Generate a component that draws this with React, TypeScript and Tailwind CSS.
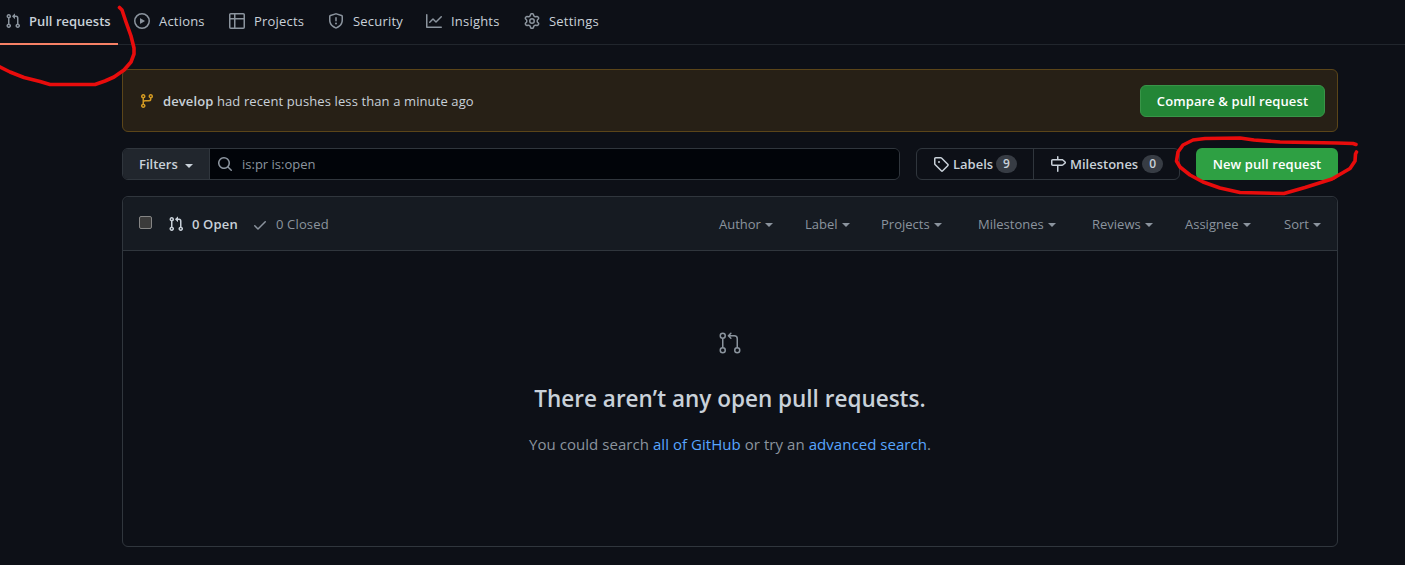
import React from "react";
import { GoGitPullRequest } from "react-icons/go";

const paths = {
  pull: "M7.177 3.073L9.573.677A.25.25 0 0110 .854v4.792a.25.25 0 01-.427.177L7.177 3.427a.25.25 0 010-.354zM3.75 2.5a.75.75 0 100 1.5.75.75 0 000-1.5zm-2.25.75a2.25 2.25 0 113 2.122v5.256a2.251 2.251 0 11-1.5 0V5.372A2.25 2.25 0 011.5 3.25zM11 2.5h-1V4h1a1 1 0 011 1v5.628a2.251 2.251 0 101.5 0V5A2.5 2.5 0 0011 2.5zm1 10.25a.75.75 0 111.5 0 .75.75 0 01-1.5 0zM3.75 12a.75.75 0 100 1.5.75.75 0 000-1.5z",
  play: "M1.5 8a6.5 6.5 0 1113 0 6.5 6.5 0 01-13 0zM8 0a8 8 0 100 16A8 8 0 008 0zM6.379 5.227A.25.25 0 006 5.442v5.117a.25.25 0 00.379.214l4.264-2.559a.25.25 0 000-.428L6.379 5.227z",
  table: "M0 1.75C0 .784.784 0 1.75 0h12.5C15.216 0 16 .784 16 1.75v3.585a.746.746 0 010 .83v8.085A1.75 1.75 0 0114.25 16H6.309a.748.748 0 01-1.118 0H1.75A1.75 1.75 0 010 14.25V6.165a.746.746 0 010-.83V1.75zM1.5 6.5v7.75c0 .138.112.25.25.25H5v-8H1.5zM5 5H1.5V1.75a.25.25 0 01.25-.25H5V5zm1.5 1.5v8h7.75a.25.25 0 00.25-.25V6.5h-8zm8-1.5h-8V1.5h7.75a.25.25 0 01.25.25V5z",
  shield: "M7.467.133a1.75 1.75 0 011.066 0l5.25 1.68A1.75 1.75 0 0115 3.48V7c0 1.566-.32 3.182-1.303 4.682-.983 1.498-2.585 2.813-5.032 3.855a1.7 1.7 0 01-1.33 0c-2.447-1.042-4.049-2.357-5.032-3.855C1.32 10.182 1 8.566 1 7V3.48a1.75 1.75 0 011.217-1.667l5.25-1.68zm.61 1.429a.25.25 0 00-.153 0l-5.25 1.68a.25.25 0 00-.174.238V7c0 1.358.275 2.666 1.057 3.86.784 1.194 2.121 2.34 4.366 3.297a.2.2 0 00.154 0c2.245-.956 3.582-2.104 4.366-3.298C13.225 9.666 13.5 8.36 13.5 7V3.48a.25.25 0 00-.174-.237l-5.25-1.68zM9 10.5a1 1 0 11-2 0 1 1 0 012 0zm-.25-5.75a.75.75 0 10-1.5 0v3a.75.75 0 001.5 0v-3z",
  graph: "M1.5 1.75a.75.75 0 00-1.5 0v12.5c0 .414.336.75.75.75h14.5a.75.75 0 000-1.5H1.5V1.75zm14.28 2.53a.75.75 0 00-1.06-1.06L10 7.94 7.53 5.47a.75.75 0 00-1.06 0L3.22 8.72a.75.75 0 001.06 1.06L7 7.06l2.47 2.47a.75.75 0 001.06 0l5.25-5.25z",
  gear: "M7.429 1.525a6.593 6.593 0 011.142 0c.036.003.108.036.137.146l.289 1.105c.147.56.55.967.997 1.189.174.086.341.183.501.29.417.278.97.423 1.53.27l1.102-.303c.11-.03.175.016.195.046.219.31.41.641.573.989.014.031.022.11-.059.19l-.815.806c-.411.406-.562.957-.53 1.456a4.588 4.588 0 010 .582c-.032.499.119 1.05.53 1.456l.815.806c.08.08.073.159.059.19a6.494 6.494 0 01-.573.99c-.02.029-.086.074-.195.045l-1.103-.303c-.559-.153-1.112-.008-1.529.27-.16.107-.327.204-.5.29-.449.222-.851.628-.998 1.189l-.289 1.105c-.029.11-.101.143-.137.146a6.613 6.613 0 01-1.142 0c-.036-.003-.108-.037-.137-.146l-.289-1.105c-.147-.56-.55-.967-.997-1.189a4.502 4.502 0 01-.501-.29c-.417-.278-.97-.423-1.53-.27l-1.102.303c-.11.03-.175-.016-.195-.046a6.492 6.492 0 01-.573-.989c-.014-.031-.022-.11.059-.19l.815-.806c.411-.406.562-.957.53-1.456a4.587 4.587 0 010-.582c.032-.499-.119-1.05-.53-1.456l-.815-.806c-.08-.08-.073-.159-.059-.19a6.44 6.44 0 01.573-.99c.02-.029.086-.075.195-.045l1.103.303c.559.153 1.112.008 1.529-.27.16-.107.327-.204.5-.29.449-.222.851-.628.998-1.189l.289-1.105c.029-.11.101-.143.137-.146zM8 0c-.236 0-.47.01-.701.03-.743.065-1.29.615-1.458 1.261l-.29 1.106c-.017.066-.078.158-.211.224a5.994 5.994 0 00-.668.386c-.123.082-.233.09-.3.071L3.27 2.776c-.644-.177-1.392.02-1.82.63a7.977 7.977 0 00-.704 1.217c-.315.675-.111 1.422.363 1.891l.815.806c.05.048.098.147.088.294a6.084 6.084 0 000 .772c.01.147-.038.246-.088.294l-.815.806c-.474.469-.678 1.216-.363 1.891.2.428.436.835.704 1.218.428.609 1.176.806 1.82.63l1.103-.303c.066-.019.176-.011.299.071.213.143.436.272.668.386.133.066.194.158.212.224l.289 1.106c.169.646.715 1.196 1.458 1.26a8.094 8.094 0 001.402 0c.743-.064 1.29-.614 1.458-1.26l.29-1.106c.017-.066.078-.158.211-.224a5.98 5.98 0 00.668-.386c.123-.082.233-.09.3-.071l1.102.302c.644.177 1.392-.02 1.82-.63.268-.382.505-.789.704-1.217.315-.675.111-1.422-.364-1.891l-.814-.806c-.05-.048-.098-.147-.088-.294a6.1 6.1 0 000-.772c-.01-.147.039-.246.088-.294l.814-.806c.475-.469.679-1.216.364-1.891a7.992 7.992 0 00-.704-1.218c-.428-.609-1.176-.806-1.82-.63l-1.103.303c-.066.019-.176.011-.299-.071a5.991 5.991 0 00-.668-.386c-.133-.066-.194-.158-.212-.224L10.16 1.29C9.99.645 9.444.095 8.701.031A8.094 8.094 0 008 0zm1.5 8a1.5 1.5 0 11-3 0 1.5 1.5 0 013 0zM11 8a3 3 0 11-6 0 3 3 0 016 0z",
  branch: "M11.75 2.5a.75.75 0 100 1.5.75.75 0 000-1.5zm-2.25.75a2.25 2.25 0 113 2.122V6A2.5 2.5 0 0110 8.5H6a1 1 0 00-1 1v1.128a2.251 2.251 0 11-1.5 0V5.372a2.25 2.25 0 111.5 0v1.836A2.492 2.492 0 016 7h4a1 1 0 001-1v-.628A2.25 2.25 0 019.5 3.25zM4.25 12a.75.75 0 100 1.5.75.75 0 000-1.5zM3.5 3.25a.75.75 0 111.5 0 .75.75 0 01-1.5 0z",
  search: "M11.5 7a4.499 4.499 0 11-8.998 0A4.499 4.499 0 0111.5 7zm-.82 4.74a6 6 0 111.06-1.06l3.04 3.04a.75.75 0 11-1.06 1.06l-3.04-3.04z",
  tag: "M2.5 7.775V2.75a.25.25 0 01.25-.25h5.025a.25.25 0 01.177.073l6.25 6.25a.25.25 0 010 .354l-5.025 5.025a.25.25 0 01-.354 0l-6.25-6.25a.25.25 0 01-.073-.177zm-1.5 0V2.75C1 1.784 1.784 1 2.75 1h5.025c.464 0 .91.184 1.238.513l6.25 6.25a1.75 1.75 0 010 2.474l-5.026 5.026a1.75 1.75 0 01-2.474 0l-6.25-6.25A1.75 1.75 0 011 7.775zM6 5a1 1 0 100 2 1 1 0 000-2z",
  milestone: "M7.75 0a.75.75 0 01.75.75V3h3.634c.414 0 .814.147 1.13.414l2.07 1.75a1.75 1.75 0 010 2.672l-2.07 1.75a1.75 1.75 0 01-1.13.414H8.5v5.25a.75.75 0 11-1.5 0V10H2.75A1.75 1.75 0 011 8.25v-3.5C1 3.784 1.784 3 2.75 3H7V.75A.75.75 0 017.75 0zm0 8.5h4.384a.25.25 0 00.161-.06l2.07-1.75a.25.25 0 000-.38l-2.07-1.75a.25.25 0 00-.161-.06H2.75a.25.25 0 00-.25.25v3.5c0 .138.112.25.25.25h5z",
  check: "M13.78 4.22a.75.75 0 010 1.06l-7.25 7.25a.75.75 0 01-1.06 0L2.22 9.28a.75.75 0 011.06-1.06L6 10.94l6.72-6.72a.75.75 0 011.06 0z",
};

function Icon({ name, className = "" }: { name: keyof typeof paths; className?: string }) {
  return (
    <svg viewBox="0 0 16 16" fill="currentColor" fillRule="evenodd" className={`size-4 shrink-0 ${className}`}>
      <path d={paths[name]} />
    </svg>
  );
}

function Caret({ className = "" }: { className?: string }) {
  return <span className={`mt-[3px] inline-block border-x-4 border-t-4 border-x-transparent border-t-current ${className}`} />;
}

const tabs: { icon: keyof typeof paths; label: string; width: string }[] = [
  { icon: "play", label: "Actions", width: "w-[95px]" },
  { icon: "table", label: "Projects", width: "w-[99px]" },
  { icon: "shield", label: "Security", width: "w-[98px]" },
  { icon: "graph", label: "Insights", width: "w-[98px]" },
  { icon: "gear", label: "Settings", width: "w-[98px]" },
];

const menus = [
  { label: "Author", width: "w-[86px]" },
  { label: "Label", width: "w-[76px]" },
  { label: "Projects", width: "w-[97px]" },
  { label: "Milestones", width: "w-[114px]" },
  { label: "Reviews", width: "w-[93px]" },
  { label: "Assignee", width: "w-[99px]" },
  { label: "Sort", width: "w-[53px]" },
];

export default function App() {
  return (
    <div className="relative h-[565px] w-[1405px] overflow-hidden bg-[#0d1017] font-['Open_Sans','Noto_Sans',sans-serif] text-[13px] leading-5 whitespace-nowrap text-[#c9d1d9]">
      <nav className="flex h-[45px] border-b border-[#21262d]">
        <div className="flex h-[45px] w-[118px] shrink-0 items-center border-b-2 border-[#f78166] pb-px pl-[5px] font-semibold">
          <Icon name="pull" className="mr-2 text-[#8b949e]" />
          <span>Pull requests</span>
        </div>
        <div className="flex h-[42px] items-center pl-4">
          {tabs.map((t) => (
            <div key={t.label} className={`flex shrink-0 items-center ${t.width}`}>
              <Icon name={t.icon} className="mr-[9px] text-[#8b949e]" />
              <span className="tracking-[0.2px]">{t.label}</span>
            </div>
          ))}
        </div>
      </nav>

      <main className="mt-6 ml-[122px] w-[1216px]">
        <section className="flex h-[63px] items-center rounded-md border border-[#5b4519] bg-[#272016] pr-3 pl-4">
          <Icon name="branch" className="mr-2 text-[#d29922]" />
          <span className="tracking-[0.11px]">
            <b className="font-semibold">develop</b> had recent pushes less than a minute ago
          </span>
          <button className="ml-auto h-8 w-[185px] rounded-md border border-[#389548] bg-[#238636] font-semibold tracking-[0.1px] text-white">
            Compare &amp; pull request
          </button>
        </section>

        <section className="mt-4 flex h-8">
          <div className="flex w-[778px] overflow-hidden rounded-md border border-[#30363d]">
            <div className="flex w-[87px] items-center border-r border-[#30363d] bg-[#21262d] pl-4 font-semibold">
              Filters
              <Caret className="ml-[7px]" />
            </div>
            <div className="flex flex-1 items-center bg-[#010409] pl-[7px] text-[#8b949e]">
              <Icon name="search" className="mr-[9px]" />
              is:pr is:open
            </div>
          </div>
          <div className="ml-4 flex w-[264px] rounded-md border border-[#30363d] font-semibold">
            <div className="flex w-[117px] items-center border-r border-[#30363d] pl-4">
              <Icon name="tag" className="mr-1" />
              <span className="w-[39px]">Labels</span>
              <span className="ml-1 h-[18px] w-[21px] rounded-full bg-[#373c44] text-center text-xs leading-[18px]">9</span>
            </div>
            <div className="flex items-center pl-4">
              <Icon name="milestone" className="mr-1" />
              Milestones
              <span className="ml-1 h-[18px] w-[21px] rounded-full bg-[#373c44] text-center text-xs leading-[18px]">0</span>
            </div>
          </div>
          <button className="ml-4 w-[142px] rounded-md bg-[#2ea043] font-semibold tracking-[0.1px] text-white">New pull request</button>
        </section>

        <section className="mt-4 h-[351px] rounded-md border border-[#30363d]">
          <header className="flex h-[54px] items-center rounded-t-md border-b border-[#30363d] bg-[#161b22] pl-4 text-[#8b949e]">
            <span className="mr-4 mb-[3px] size-[13px] rounded-[2px] border border-[#858585] bg-[#3b3b3b]" />
            <Icon name="pull" className="mr-2 text-[#c9d1d9]" />
            <span className="w-[60px] font-semibold tracking-[0.15px] text-[#c9d1d9]">0 Open</span>
            <Icon name="check" className="mt-0.5 mr-2" />
            <span className="tracking-[0.15px]">0 Closed</span>
            <div className="ml-auto flex">
              {menus.map((m) => (
                <div key={m.label} className={`flex shrink-0 items-center ${m.width}`}>
                  {m.label}
                  <Caret className="ml-1" />
                </div>
              ))}
            </div>
          </header>
          <div className="flex flex-col items-center pt-20">
            <GoGitPullRequest className="size-6 text-[#8b949e]" />
            <h3 className="mt-[26px] text-[22.5px] leading-9 font-semibold">There aren’t any open pull requests.</h3>
            <p className="mt-[15px] text-[15px] leading-6 tracking-[0.05px] text-[#8b949e]">
              You could search <a className="text-[#58a6ff]">all of GitHub</a> or try an{" "}
              <a className="text-[#58a6ff]">advanced search</a>.
            </p>
          </div>
        </section>
      </main>

      <svg viewBox="0 0 1405 565" className="pointer-events-none absolute inset-0 h-full w-full" fill="none" stroke="#e80c0c" strokeWidth="3.6" strokeLinecap="round" strokeLinejoin="round">
        <path d="M119.500 7.500L122 10L126 22L131 36L134 48L134 54L131 62L124 70L114 77L105 81L95 84.500L50 84.500L40 81.500L24 77.500L10 72L-2 66" />
        <path d="M1356 144.500L1353 143.500L1337 143L1280 142L1254 140L1240 138L1205 138.500L1193 140L1183 145L1178 152L1176.500 161L1180 167L1190 175L1203 182L1220 188L1240 192.500L1284 193.500L1305 187.500L1332 179L1350 168.500L1355 161L1355.500 154L1356.500 152" />
      </svg>
    </div>
  );
}
